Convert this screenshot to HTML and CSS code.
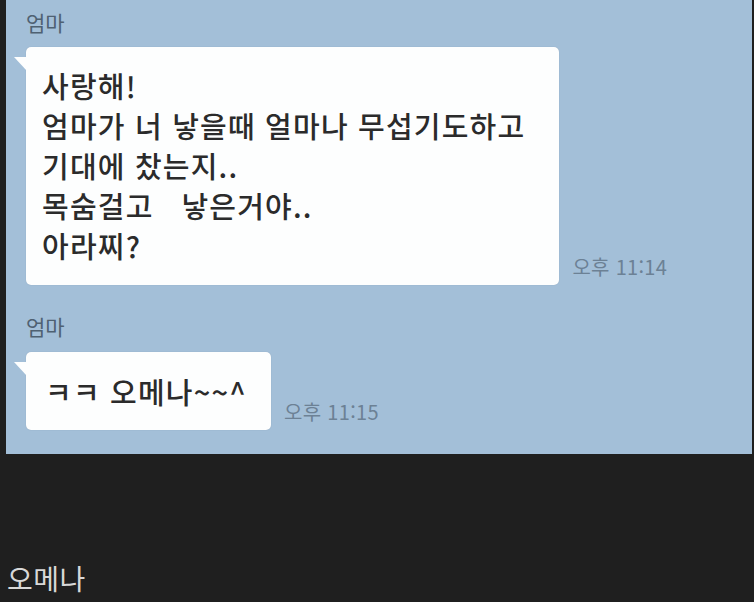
FILE: index.html
```html
<!DOCTYPE html>
<html lang="ko">
<head>
    <meta charset="UTF-8">
    <meta name="viewport" content="width=device-width, initial-scale=1.0">
    <title>오메나</title>
    <link rel="stylesheet" href="styles.css">
</head>
<body>
    <div class="post">
        <div class="chat">
            <div class="name">엄마</div>
            <div class="row">
                <div class="bubble">사랑해!<br>엄마가 너 낳을때 얼마나 무섭기도하고<br>기대에 찼는지..<br>목숨걸고&nbsp;&nbsp;&nbsp;낳은거야..<br>아라찌?</div>
                <span class="time">오후 11:14</span>
            </div>
            <div class="name second">엄마</div>
            <div class="row">
                <div class="bubble short">ㅋㅋ 오메나~~^</div>
                <span class="time">오후 11:15</span>
            </div>
        </div>
        <p class="caption">오메나</p>
    </div>
</body>
</html>
```

FILE: styles.css
```css
body {
    margin: 0;
    padding: 0;
    background: #1f1f1f;
    font-family: "Noto Sans CJK KR", "Noto Sans", sans-serif;
}

.post {
    padding-left: 6px;
}

.chat {
    width: 746px;
    height: 454px;
    box-sizing: border-box;
    background: #a3bfd8;
    padding: 10px 0 0 20px;
    display: flex;
    flex-direction: column;
    align-items: flex-start;
}

.name {
    font-size: 21px;
    line-height: 24px;
    color: #4f6172;
    margin-bottom: 13px;
}

.name.second {
    margin-top: 29px;
    margin-bottom: 14px;
}

.row {
    display: flex;
    align-items: flex-end;
}

.bubble {
    position: relative;
    background: #fdfefe;
    border-radius: 5px;
    box-shadow: 0 0 1px rgba(90, 110, 130, 0.4);
    color: #2b2b2b;
    font-size: 29px;
    font-weight: 500;
    line-height: 40px;
    letter-spacing: 1.2px;
    padding: 18px 34px 20px 16px;
}

.bubble::before {
    content: "";
    position: absolute;
    left: -12px;
    top: 10px;
    width: 13px;
    height: 14px;
    background: #fdfefe;
    clip-path: polygon(0 0, 100% 0, 100% 100%);
}

.bubble.short {
    padding: 19px 24px 19px 19px;
}

.time {
    font-size: 20px;
    line-height: 24px;
    letter-spacing: 0.3px;
    color: #6c8195;
    margin: 0 0 6px 13px;
}

.caption {
    margin: 106px 0 0 1px;
    font-size: 28px;
    line-height: 36px;
    letter-spacing: 0.5px;
    color: #d8d8d8;
}
```
